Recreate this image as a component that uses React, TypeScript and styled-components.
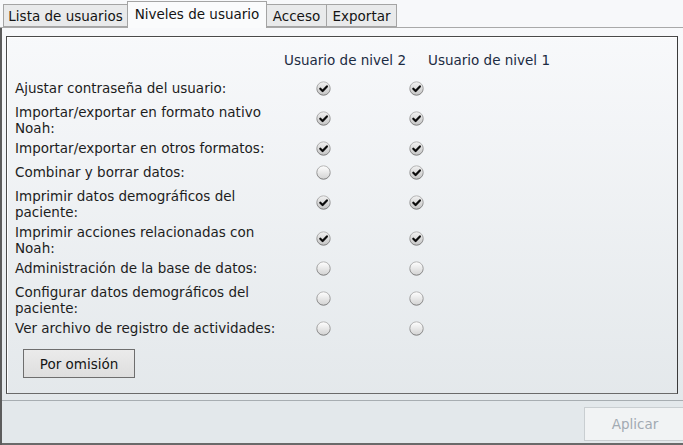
import React from "react";
import styled, { createGlobalStyle } from "styled-components";

const GlobalStyle = createGlobalStyle`
  html, body { margin: 0; padding: 0; background: #f7f8fa; }
  body {
    font-family: "DejaVu Sans", sans-serif;
    font-size: 13.5px;
    color: #1d1d1d;
  }
`;

const Root = styled.div`
  width: 683px;
  height: 445px;
  display: flex;
  flex-direction: column;
  overflow: hidden;
  background: #f7f8fa;
`;

const TabStrip = styled.div`
  height: 28px;
  flex: none;
  box-sizing: border-box;
  display: flex;
  align-items: flex-end;
  padding-left: 4px;
  border-bottom: 1px solid #a9a9a9;
`;

const Tab = styled.div<{ $active?: boolean; $w: number }>`
  box-sizing: border-box;
  width: ${(p) => p.$w}px;
  height: ${(p) => (p.$active ? "27px" : "23px")};
  margin-bottom: ${(p) => (p.$active ? "-1px" : "0")};
  display: flex;
  align-items: center;
  justify-content: center;
  padding-bottom: ${(p) => (p.$active ? "3px" : "0")};
  border: 1px solid #a4a4a4;
  border-bottom: ${(p) => (p.$active ? "none" : "1px solid #a4a4a4")};
  margin-left: -1px;
  background: ${(p) => (p.$active ? "#fafbfc" : "#e9eaeb")};
  color: #141414;
  white-space: nowrap;
  position: relative;
  z-index: ${(p) => (p.$active ? 1 : 0)};
`;

const WindowBody = styled.div`
  flex: 1;
  display: flex;
  flex-direction: column;
  border-left: 2px solid #5c5c5c;
  background: linear-gradient(#f8f9fb, #e1e6e9);
  min-height: 0;
`;

const Panel = styled.div`
  flex: 1;
  display: flex;
  padding: 8px 5px 6px 4px;
  min-height: 0;
`;

const GroupBox = styled.div`
  flex: 1;
  box-sizing: border-box;
  border: 1px solid #4a4a4a;
  border-right-color: #3a3a3a;
  border-bottom-color: #6a6a6a;
  box-shadow: inset 1px 1px 0 #ffffff;
  padding: 15px 8px 0 8px;
  display: flex;
  flex-direction: column;
`;

const HeaderRow = styled.div`
  display: flex;
  padding-left: 269px;
  line-height: 16px;
  margin-bottom: 8px;
  color: #1c2b42;
`;

const HeaderCell = styled.div`
  width: 144px;
  white-space: nowrap;
`;

const Matrix = styled.div`
  display: grid;
  grid-template-columns: 293px 30px 63px 30px;
`;

const Label = styled.div<{ $tall?: boolean }>`
  grid-column: 1;
  height: ${(p) => (p.$tall ? "36px" : "24px")};
  display: flex;
  flex-direction: column;
  justify-content: ${(p) => (p.$tall ? "flex-end" : "center")};
  line-height: 16px;
  white-space: nowrap;
`;

const CheckCell = styled.div<{ $col: number }>`
  grid-column: ${(p) => p.$col};
  display: flex;
  align-items: center;
  justify-content: center;
`;

const DefaultsButton = styled.button`
  align-self: flex-start;
  margin: 9px 0 0 8px;
  width: 112px;
  height: 29px;
  box-sizing: border-box;
  border: 1px solid #6e6e6e;
  background: linear-gradient(#ebebeb, #dedede);
  font: inherit;
  color: #151515;
  padding: 0;
`;

const Footer = styled.div`
  flex: none;
  height: 45px;
  box-sizing: border-box;
  border-top: 1px solid #a7adb1;
  border-bottom: 2px solid #6a6a6a;
  background: #e3e8eb;
  display: flex;
  justify-content: flex-end;
  align-items: flex-start;
  padding-top: 6px;
`;

const ApplyButton = styled.button`
  width: 99px;
  height: 34px;
  box-sizing: border-box;
  border: 1px solid #c9ced1;
  border-right: none;
  background: #f1f3f4;
  font: inherit;
  color: #a2aab2;
  padding: 0 0 0 2px;
`;

function RoundCheck({ checked }: { checked: boolean }) {
  return (
    <svg width="15" height="15" viewBox="0 0 15 15">
      <defs>
        <linearGradient id="rc-fill" x1="0" y1="0" x2="0" y2="1">
          <stop offset="0" stopColor="#ffffff" />
          <stop offset="1" stopColor="#d2d2d2" />
        </linearGradient>
        <linearGradient id="rc-fill-on" x1="0" y1="0" x2="0" y2="1">
          <stop offset="0" stopColor="#f2f2f2" />
          <stop offset="1" stopColor="#c4c4c4" />
        </linearGradient>
        <linearGradient id="rc-ring" x1="0" y1="0" x2="0" y2="1">
          <stop offset="0" stopColor="#b8b8b8" />
          <stop offset="1" stopColor="#7a7a7a" />
        </linearGradient>
      </defs>
      <circle
        cx="7.5"
        cy="7.5"
        r="6.7"
        fill={checked ? "url(#rc-fill-on)" : "url(#rc-fill)"}
        stroke="url(#rc-ring)"
        strokeWidth="1"
      />
      {checked && (
        <path
          d="M4.3 7.7 L6.6 10 L10.9 5.4"
          fill="none"
          stroke="#0c0c0c"
          strokeWidth="2.2"
          strokeLinecap="round"
          strokeLinejoin="round"
        />
      )}
    </svg>
  );
}

type Permission = { lines: string[]; level2: boolean; level1: boolean };

const permissions: Permission[] = [
  { lines: ["Ajustar contraseña del usuario:"], level2: true, level1: true },
  { lines: ["Importar/exportar en formato nativo", "Noah:"], level2: true, level1: true },
  { lines: ["Importar/exportar en otros formatos:"], level2: true, level1: true },
  { lines: ["Combinar y borrar datos:"], level2: false, level1: true },
  { lines: ["Imprimir datos demográficos del", "paciente:"], level2: true, level1: true },
  { lines: ["Imprimir acciones relacionadas con", "Noah:"], level2: true, level1: true },
  { lines: ["Administración de la base de datos:"], level2: false, level1: false },
  { lines: ["Configurar datos demográficos del", "paciente:"], level2: false, level1: false },
  { lines: ["Ver archivo de registro de actividades:"], level2: false, level1: false },
];

const tabs = [
  { label: "Lista de usuarios", w: 125 },
  { label: "Niveles de usuario", w: 140 },
  { label: "Acceso", w: 61 },
  { label: "Exportar", w: 71 },
];

export default function App() {
  return (
    <Root>
      <GlobalStyle />
      <TabStrip>
        {tabs.map((t, i) => (
          <Tab key={t.label} $active={i === 1} $w={t.w}>
            {t.label}
          </Tab>
        ))}
      </TabStrip>
      <WindowBody>
        <Panel>
          <GroupBox>
            <HeaderRow>
              <HeaderCell>Usuario de nivel 2</HeaderCell>
              <HeaderCell>Usuario de nivel 1</HeaderCell>
            </HeaderRow>
            <Matrix>
              {permissions.map((p, i) => (
                <React.Fragment key={i}>
                  <Label $tall={p.lines.length > 1}>
                    {p.lines.map((l) => (
                      <span key={l}>{l}</span>
                    ))}
                  </Label>
                  <CheckCell $col={2}>
                    <RoundCheck checked={p.level2} />
                  </CheckCell>
                  <CheckCell $col={4}>
                    <RoundCheck checked={p.level1} />
                  </CheckCell>
                </React.Fragment>
              ))}
            </Matrix>
            <DefaultsButton>Por omisión</DefaultsButton>
          </GroupBox>
        </Panel>
        <Footer>
          <ApplyButton disabled>Aplicar</ApplyButton>
        </Footer>
      </WindowBody>
    </Root>
  );
}
